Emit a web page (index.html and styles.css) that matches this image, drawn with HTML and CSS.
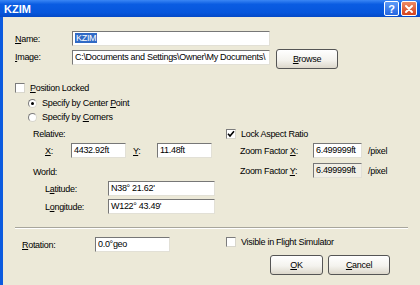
FILE: index.html
```html
<!DOCTYPE html>
<html lang="en">
<head>
  <meta charset="UTF-8">
  <title>KZIM</title>
  <link rel="stylesheet" href="styles.css">
</head>
<body>

  <div class="titlebar">
    <span class="title">KZIM</span>
    <div class="caption">
      <span class="cbtn help">?</span>
      <span class="cbtn close">
        <svg width="10" height="10" viewBox="0 0 10 10"><path d="M2 2 L8 8 M8 2 L2 8" stroke="#fff" stroke-width="2" stroke-linecap="round"/></svg>
      </span>
    </div>
  </div>

  <div class="dialog">
    <div class="row">
      <span class="lbl-main"><u>N</u>ame:</span>
      <div class="field wide"><span class="sel">KZIM</span></div>
    </div>

    <div class="row top image-row">
      <span class="lbl-main pad1"><u>I</u>mage:</span>
      <div class="field wide pad1">C:\Documents and Settings\Owner\My Documents\</div>
      <div class="btn browse"><span><u>B</u>rowse</span></div>
    </div>

    <div class="row line pos-row">
      <span class="check"></span>
      <span><u>P</u>osition Locked</span>
    </div>

    <div class="row line radio-row first">
      <span class="radio on"></span>
      <span>Specify by Center <u>P</u>oint</span>
    </div>
    <div class="row line radio-row">
      <span class="radio"></span>
      <span>Specify by <u>C</u>orners</span>
    </div>

    <div class="cols">
      <div class="col-left">
        <div class="line sub-head">Relative:</div>
        <div class="row gap3">
          <span class="lbl-x"><u>X</u>:</span>
          <div class="field small">4432.92ft</div>
          <span class="lbl-y"><u>Y</u>:</span>
          <div class="field small">11.48ft</div>
        </div>
        <div class="line sub-head world">World:</div>
        <div class="row gap3">
          <span class="lbl-geo">L<u>a</u>titude:</span>
          <div class="field geo">N38° 21.62'</div>
        </div>
        <div class="row gap3">
          <span class="lbl-geo">L<u>o</u>ngitude:</span>
          <div class="field geo">W122° 43.49'</div>
        </div>
      </div>

      <div class="col-right">
        <div class="row line">
          <span class="check">
            <svg width="8" height="8" viewBox="0 0 8 8"><path d="M1 3.8 L3 6 L7 1.2" fill="none" stroke="#000" stroke-width="1.6"/></svg>
          </span>
          <span>Lock Aspect Ratio</span>
        </div>
        <div class="row gap3">
          <span class="lbl-zoom">Zoom Factor <u>X</u>:</span>
          <div class="field zoom">6.499999ft</div>
          <span class="unit">/pixel</span>
        </div>
        <div class="row gap5">
          <span class="lbl-zoom">Zoom Factor <u>Y</u>:</span>
          <div class="field zoom disabled">6.499999ft</div>
          <span class="unit">/pixel</span>
        </div>
      </div>
    </div>

    <div class="separator"></div>

    <div class="row top bottom-row">
      <div class="row rot">
        <span class="lbl-rot"><u>R</u>otation:</span>
        <div class="field rotation">0.0°geo</div>
      </div>
      <div class="row visible">
        <span class="check"></span>
        <span>Visible in Flight Simulator</span>
      </div>
    </div>

    <div class="buttons">
      <div class="btn ok"><span><u>O</u>K</span></div>
      <div class="btn cancel"><span><u>C</u>ancel</span></div>
    </div>
  </div>

</body>
</html>
```

FILE: styles.css
```css
body {
  margin: 0;
  width: 420px;
  height: 285px;
  overflow: hidden;
  font-family: "Liberation Sans", Arial, sans-serif;
  font-size: 9px;
  letter-spacing: -0.3px;
  background: #ece9d8;
  color: #000;
}

u {
  text-decoration: underline;
}

.titlebar {
  height: 17px;
  display: flex;
  align-items: center;
  justify-content: space-between;
  padding: 0 3px 0 4px;
  background: linear-gradient(#3a86f5, #0a5ce2 25%, #0656dc 75%, #0449c6);
}

.title {
  color: #fff;
  font-weight: bold;
  font-size: 11px;
  letter-spacing: 0;
}

.caption {
  display: flex;
  gap: 2px;
}

.cbtn {
  width: 13px;
  height: 13px;
  border: 1px solid #fff;
  border-radius: 2px;
  display: flex;
  align-items: center;
  justify-content: center;
  color: #fff;
  font-weight: bold;
  font-size: 11px;
  letter-spacing: 0;
}

.help {
  background: linear-gradient(#5d9bf7, #2566e0);
}

.close {
  width: 14px;
  background: linear-gradient(#ec8a66, #d5421c);
}

.dialog {
  border-left: 3px solid #0b5bdf;
  height: 254px;
  padding: 14px 0 0 12px;
}

.row {
  display: flex;
  align-items: center;
}

.row.top {
  align-items: flex-start;
}

.line {
  height: 12px;
  line-height: 12px;
}

.field {
  height: 15px;
  box-sizing: border-box;
  border: 1px solid;
  border-color: #777 #e2e0d6 #e2e0d6 #777;
  background: #fff;
  padding: 0 2px;
  line-height: 13px;
  white-space: nowrap;
  overflow: hidden;
}

.field.disabled {
  background: #f1efe6;
}

.sel {
  background: #316ac5;
  color: #fff;
  padding: 0 1px;
}

.lbl-main {
  width: 57px;
}

.pad1 {
  margin-top: 1px;
  line-height: 15px;
}

.field.pad1 {
  line-height: 13px;
}

.wide {
  width: 198px;
}

.image-row {
  margin-top: 3px;
}

.btn {
  height: 20px;
  box-sizing: border-box;
  border: 1px solid #555;
  border-radius: 3px;
  background: linear-gradient(#fff, #f4f3ee 55%, #dcd7cb);
  display: flex;
  align-items: center;
  justify-content: center;
}

.browse {
  width: 62px;
  margin-left: 6px;
}

.check {
  width: 10px;
  height: 10px;
  box-sizing: border-box;
  border: 1px solid;
  border-color: #7c7c7c #d8d6cc #d8d6cc #7c7c7c;
  background: #fff;
  margin-right: 5px;
  display: flex;
  align-items: center;
  justify-content: center;
}

.pos-row {
  margin-top: 13px;
}

.radio-row {
  padding-left: 13px;
  margin-top: 2px;
}

.radio-row.first {
  margin-top: 3px;
}

.radio {
  width: 9px;
  height: 9px;
  box-sizing: border-box;
  border: 1px solid;
  border-color: #7c7c7c #d8d6cc #d8d6cc #7c7c7c;
  border-radius: 50%;
  background: #fff;
  margin-right: 5px;
  display: flex;
  align-items: center;
  justify-content: center;
}

.radio.on::after {
  content: "";
  width: 3px;
  height: 3px;
  border-radius: 50%;
  background: #000;
}

.cols {
  display: flex;
  margin-top: 5px;
}

.col-left {
  width: 211px;
}

.sub-head {
  padding-left: 18px;
}

.sub-head.world {
  margin-top: 8px;
}

.gap3 {
  margin-top: 3px;
}

.gap5 {
  margin-top: 5px;
}

.lbl-x {
  padding-left: 30px;
  width: 26px;
}

.lbl-y {
  margin-left: 7px;
  width: 24px;
}

.small {
  width: 55px;
}

.lbl-geo {
  padding-left: 30px;
  width: 63px;
}

.geo {
  width: 107px;
}

.lbl-zoom {
  padding-left: 14px;
  width: 73px;
}

.zoom {
  width: 49px;
}

.unit {
  margin-left: 6px;
}

.separator {
  width: 393px;
  margin-top: 13px;
  border-top: 1px solid #a8a69c;
  border-bottom: 1px solid #fff;
}

.bottom-row {
  margin-top: 8px;
}

.rot {
  width: 211px;
}

.lbl-rot {
  padding-left: 7px;
  width: 73px;
}

.rotation {
  width: 75px;
}

.visible {
  height: 10px;
}

.buttons {
  width: 375px;
  margin-top: 3px;
  display: flex;
  justify-content: flex-end;
  gap: 5px;
}

.ok {
  width: 53px;
}

.cancel {
  width: 62px;
}
```
